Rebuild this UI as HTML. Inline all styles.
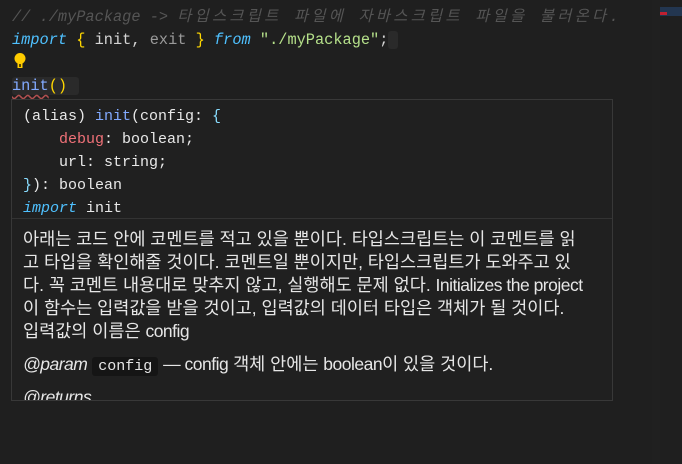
<!DOCTYPE html>
<html><head><meta charset="utf-8"><style>
html,body{margin:0;padding:0;background:#1f1f1f;width:682px;height:464px;overflow:hidden}
.ed{position:absolute;left:12px;top:6px;font:15.3px/23px "Liberation Mono","Noto Sans CJK KR",monospace;color:#d4d4d4}
.ln{height:23px;white-space:pre}
.cm{color:#555;font-style:italic}
.ko{letter-spacing:3.3px}
.kw{color:#4fc1ff;font-style:italic}
.br{color:#ffd700}
.str{color:#b5e08a}
.fade{color:#9a9a9a}
.fn{color:#82aaff}
.hl{background:#2a2a2a;border-radius:3px;padding:0 12px 0 0}
.hov{position:absolute;left:11px;top:99px;width:600px;height:300px;border:1px solid #383838;background:#202020;overflow:hidden}
.code{padding:5px 0 0 11px;font:15px/23px "Liberation Mono",monospace;color:#e8e8e8;height:113px;border-bottom:1px solid #333}
.code div{white-space:pre;height:23px}
.p{padding:9px 0 0 11px;font:17.5px/23px "Liberation Sans","Noto Sans CJK KR",sans-serif;color:#e6e6e6;letter-spacing:0}
.p div{height:23px;white-space:pre}
.en{letter-spacing:-0.5px;font-size:17.5px}
.tag{font-style:italic}
.cd{font:15px "Liberation Mono",monospace;background:#151515;padding:1px 6px;border-radius:3px}
.mm{position:absolute;left:660px;top:7px;width:22px;height:9px;background:#233650}
.mm2{position:absolute;left:660px;top:12px;width:7px;height:3px;background:#c02030}
.sb{position:absolute;left:652px;top:0;width:8px;height:464px;background:#202020}
</style></head><body>
<div class="sb"></div>
<div class="mm"></div><div class="mm2"></div>
<div class="ed">
<div class="ln"><span class="cm">// ./myPackage -&gt; <span class="ko">타입스크립트 파일에 자바스크립트 파일을 불러온다</span>.</span></div>
<div class="ln"><span class="kw">import</span> <span class="br">{</span> init, <span class="fade">exit</span> <span class="br">}</span> <span class="kw">from</span> <span class="str">"./myPackage"</span>;<span style="background:#2a2a2a;border-radius:3px">&nbsp;</span></div>
<div class="ln"><svg width="14" height="18" viewBox="0 0 14 18" style="vertical-align:-3px;margin-left:1px"><circle cx="7" cy="6.5" r="5.5" fill="#ffcc00"/><rect x="4.5" y="10" width="5" height="6" fill="#ffcc00"/><rect x="6" y="12" width="2" height="3" fill="#5a4a00"/></svg></div>
<div class="ln"><span class="hl"><span class="fn" style="text-decoration:underline wavy #b05050;text-underline-offset:4px">init</span><span class="br">()</span></span></div>
</div>
<div class="hov">
<div class="code"><div>(alias) <span style="color:#82aaff">init</span>(config: <span style="color:#89ddff">{</span></div><div>    <span style="color:#f07178">debug</span>: boolean;</div><div>    url: string;</div><div><span style="color:#89ddff">}</span>): boolean</div><div><span class="kw">import</span> init</div></div>
<div class="p"><div>아래는 코드 안에 코멘트를 적고 있을 뿐이다. 타입스크립트는 이 코멘트를 읽</div><div>고 타입을 확인해줄 것이다. 코멘트일 뿐이지만, 타입스크립트가 도와주고 있</div><div>다. 꼭 코멘트 내용대로 맞추지 않고, 실행해도 문제 없다. <span class="en">Initializes the project</span></div><div>이 함수는 입력값을 받을 것이고, 입력값의 데이터 타입은 객체가 될 것이다.</div><div>입력값의 이름은 <span class="en">config</span></div><div style="height:10px"></div><div><span class="tag en">@param</span> <span class="cd">config</span> <span class="en">— config</span> 객체 안에는 <span class="en">boolean</span>이 있을 것이다.</div><div style="height:10px"></div><div><span class="tag en">@returns</span></div></div>
</div>
</body></html>
